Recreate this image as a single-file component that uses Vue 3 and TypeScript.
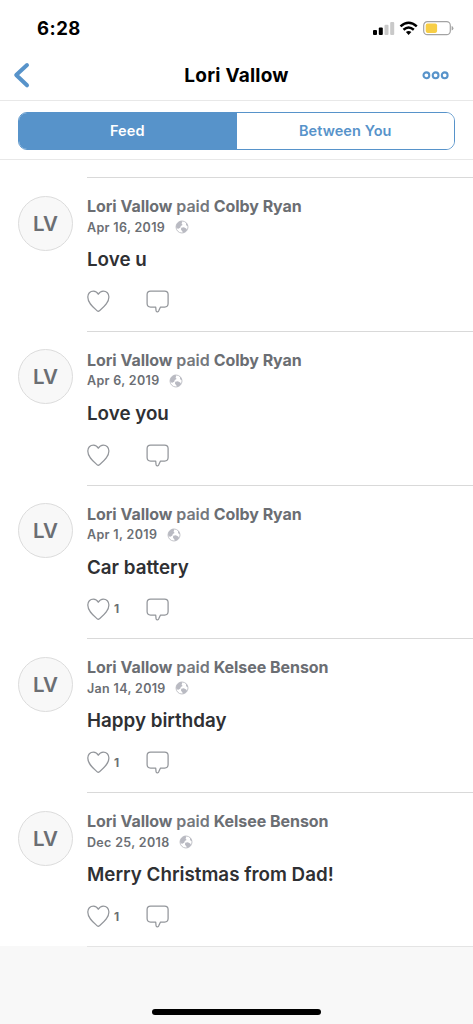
<script setup lang="ts">
interface Payment {
  from: string
  to: string
  date: string
  note: string
  likes: number
}

const payments: Payment[] = [
  { from: 'Lori Vallow', to: 'Colby Ryan', date: 'Apr 16, 2019', note: 'Love u', likes: 0 },
  { from: 'Lori Vallow', to: 'Colby Ryan', date: 'Apr 6, 2019', note: 'Love you', likes: 0 },
  { from: 'Lori Vallow', to: 'Colby Ryan', date: 'Apr 1, 2019', note: 'Car battery', likes: 1 },
  { from: 'Lori Vallow', to: 'Kelsee Benson', date: 'Jan 14, 2019', note: 'Happy birthday', likes: 1 },
  { from: 'Lori Vallow', to: 'Kelsee Benson', date: 'Dec 25, 2018', note: 'Merry Christmas from Dad!', likes: 1 },
]

const initials = (name: string): string => name.split(' ').map((w) => w[0]).join('')
</script>

<template>
  <div class="screen">
    <div class="status">
      <span class="time">6:28</span>
      <svg class="indicators" width="84" height="18" viewBox="0 0 84 18">
        <rect x="1" y="10" width="4" height="5" rx="1" fill="#000" />
        <rect x="6.8" y="7.5" width="4" height="7.5" rx="1" fill="#000" />
        <rect x="12.5" y="4.8" width="4" height="10.2" rx="1" fill="#c9c9c9" />
        <rect x="18.2" y="2" width="4" height="13" rx="1" fill="#c9c9c9" />
        <g fill="none" stroke="#000" stroke-width="2.5">
          <path d="M28.5 6.4Q36.6-.8 44.8 6.4" />
          <path d="M31.5 9.7Q36.6 5.2 41.8 9.7" />
        </g>
        <path d="M33.9 12.1Q36.6 10 39.4 12.1L36.6 15Z" fill="#000" />
        <rect x="51.7" y="1.7" width="26.6" height="13" rx="3.7" fill="#fff" stroke="#a3a3a3" stroke-width="1.2" />
        <rect x="53.7" y="3.6" width="11.4" height="9.3" rx="1.8" fill="#f7ce46" />
        <path d="M79.6 6Q81.4 6.5 81.4 8.2Q81.4 9.9 79.6 10.5Z" fill="#a3a3a3" />
      </svg>
    </div>

    <header class="nav">
      <svg class="back" width="20" height="28" viewBox="0 0 20 28">
        <path d="M14 4L3.2 14L14 24.3" fill="none" stroke="#5793ca" stroke-width="4" stroke-linecap="round" stroke-linejoin="round" />
      </svg>
      <h1 class="title">Lori Vallow</h1>
      <svg class="more" width="28" height="10" viewBox="0 0 28 10">
        <g fill="none" stroke="#5793ca" stroke-width="2.1">
          <circle cx="4.4" cy="5.3" r="2.9" />
          <circle cx="13.6" cy="5.3" r="2.9" />
          <circle cx="22.7" cy="5.3" r="2.9" />
        </g>
      </svg>
    </header>

    <div class="tabs">
      <div class="segmented">
        <button class="segment active">Feed</button>
        <button class="segment">Between You</button>
      </div>
    </div>

    <main class="feed">
      <article v-for="p in payments" :key="p.date" class="entry">
        <div class="avatar">{{ initials(p.from) }}</div>
        <div class="body">
          <div class="people"><b>{{ p.from }}</b> paid <b>{{ p.to }}</b></div>
          <div class="meta">
            <span class="date">{{ p.date }}</span>
            <svg width="14" height="14" viewBox="0 0 14 14">
              <circle cx="7" cy="7" r="6" fill="#fff" stroke="#c4c5ca" stroke-width="1" />
              <path d="M1 6.6Q1.3 2.2 6 .8L7.3 1.7L6.6 3.6L7.6 5L5.8 6L5.4 7.4L3.4 8.8L1.6 8.2Z" fill="#b9bac2" />
              <path d="M6.2 7.8L8.8 7.2L11.2 8.4L12.2 9.9Q10.6 12.6 7.9 13.1L7.3 11.2L6 9.8Z" fill="#b9bac2" />
              <path d="M10.4 2Q12.4 3.2 13.1 6L11.9 6L10.9 4.6L11.2 3.6Z" fill="#b9bac2" />
            </svg>
          </div>
          <div class="note">{{ p.note }}</div>
          <div class="actions">
            <svg class="heart" width="24" height="24" viewBox="0 0 24 24">
              <path d="M11.3 5.3C10.2 3.1 8.6 2.1 6.4 2.1C3.1 2.1.8 4.5.8 7.9C.8 13.9 5.9 18 10.2 21.8Q11.3 22.7 12.4 21.8C16.7 18 21.9 13.9 21.9 7.9C21.9 4.5 19.6 2.1 16.3 2.1C14.1 2.1 12.5 3.1 11.3 5.3Z" fill="none" stroke="#93969b" stroke-width="1.25" stroke-linejoin="round" />
            </svg>
            <span class="likes">{{ p.likes || '' }}</span>
            <svg width="24" height="24" viewBox="0 0 24 24">
              <path d="M4.6 2H18.6Q22.1 2 22.1 5.5V14.5Q22.1 18 18.6 18H14.5L12.6 22.1Q11.3 23.9 10.1 22L9.7 18H4.6Q1.1 18 1.1 14.5V5.5Q1.1 2 4.6 2Z" fill="none" stroke="#93969b" stroke-width="1.25" stroke-linejoin="round" />
            </svg>
          </div>
        </div>
      </article>
    </main>

    <footer class="footer">
      <div class="end-rule"></div>
      <div class="home"></div>
    </footer>
  </div>
</template>

<style>
body {
  margin: 0;
  background: #fff;
}
</style>

<style scoped>
.screen {
  box-sizing: border-box;
  width: 473px;
  height: 1024px;
  overflow: hidden;
  display: flex;
  flex-direction: column;
  background: #fff;
  font-family: Inter, "Liberation Sans", sans-serif;
}
.status {
  box-sizing: border-box;
  height: 50px;
  padding: 16px 18px 0 37px;
  display: flex;
  justify-content: space-between;
  align-items: flex-start;
  flex: none;
}
.time {
  font-size: 18.5px;
  line-height: 24px;
  font-weight: 700;
  letter-spacing: 0.5px;
}
.indicators {
  margin-top: 4px;
  margin-right: -1px;
}
.nav {
  box-sizing: border-box;
  height: 51px;
  border-bottom: 1px solid #e8e8e8;
  display: grid;
  grid-template-columns: 60px 1fr 60px;
  align-items: center;
  flex: none;
}
.back {
  margin-left: 13px;
}
.title {
  margin: 2px 0 0;
  text-align: center;
  font-size: 19px;
  line-height: 26px;
  font-weight: 700;
  letter-spacing: 0.22px;
}
.more {
  margin-left: 9px;
}
.tabs {
  box-sizing: border-box;
  height: 59px;
  padding: 11px 18px 0;
  border-bottom: 1px solid #e8e8e8;
  flex: none;
}
.segmented {
  box-sizing: border-box;
  height: 38px;
  border: 1px solid #5793ca;
  border-radius: 9px;
  overflow: hidden;
  display: grid;
  grid-template-columns: 1fr 1fr;
}
.segment {
  border: 0;
  padding: 0 0 1px;
  background: #fff;
  color: #5793ca;
  font: 600 14.5px Inter, "Liberation Sans", sans-serif;
  letter-spacing: 0.08px;
}
.active {
  background: #5793ca;
  color: #fff;
  padding-right: 1px;
}
.feed {
  padding: 17px 0 0 18px;
  flex: none;
}
.entry {
  height: 153.75px;
  display: grid;
  grid-template-columns: 69px 1fr;
}
.avatar {
  box-sizing: border-box;
  width: 55px;
  height: 55px;
  margin-top: 18.6px;
  border: 1px solid #dcdcdc;
  border-radius: 50%;
  background: #f8f8f8;
  color: #6b6e73;
  font-size: 20.5px;
  font-weight: 600;
  line-height: 53px;
  text-align: center;
}
.body {
  border-top: 1px solid #d9d9d9;
  padding-top: 17px;
}
.people {
  color: #75787d;
  font-size: 16px;
  font-weight: 600;
  line-height: 22px;
  letter-spacing: -0.04px;
  white-space: nowrap;
}
.people b {
  color: #6b6e73;
  font-weight: 700;
}
.meta {
  height: 20px;
  display: flex;
  align-items: center;
  gap: 9.5px;
  color: #6b6e73;
  font-size: 12.5px;
  font-weight: 600;
}
.date {
  letter-spacing: 0.34px;
}
.note {
  margin-top: 10px;
  color: #2f3033;
  font-size: 18.8px;
  font-weight: 600;
  line-height: 26px;
}
.actions {
  margin-top: 16px;
  height: 24px;
  display: flex;
  align-items: center;
}
.likes {
  width: 32px;
  padding-left: 3px;
  color: #6b6e73;
  font-size: 12px;
  font-weight: 700;
}
.footer {
  flex: 1;
  display: flex;
  flex-direction: column;
  justify-content: space-between;
  align-items: center;
  box-sizing: border-box;
  padding-bottom: 9px;
  background: #f8f8f8;
}
.end-rule {
  align-self: flex-end;
  width: 386px;
  height: 1px;
  background: #e4e4e4;
}
.home {
  width: 169px;
  height: 6px;
  border-radius: 3px;
  background: #000;
}
</style>
